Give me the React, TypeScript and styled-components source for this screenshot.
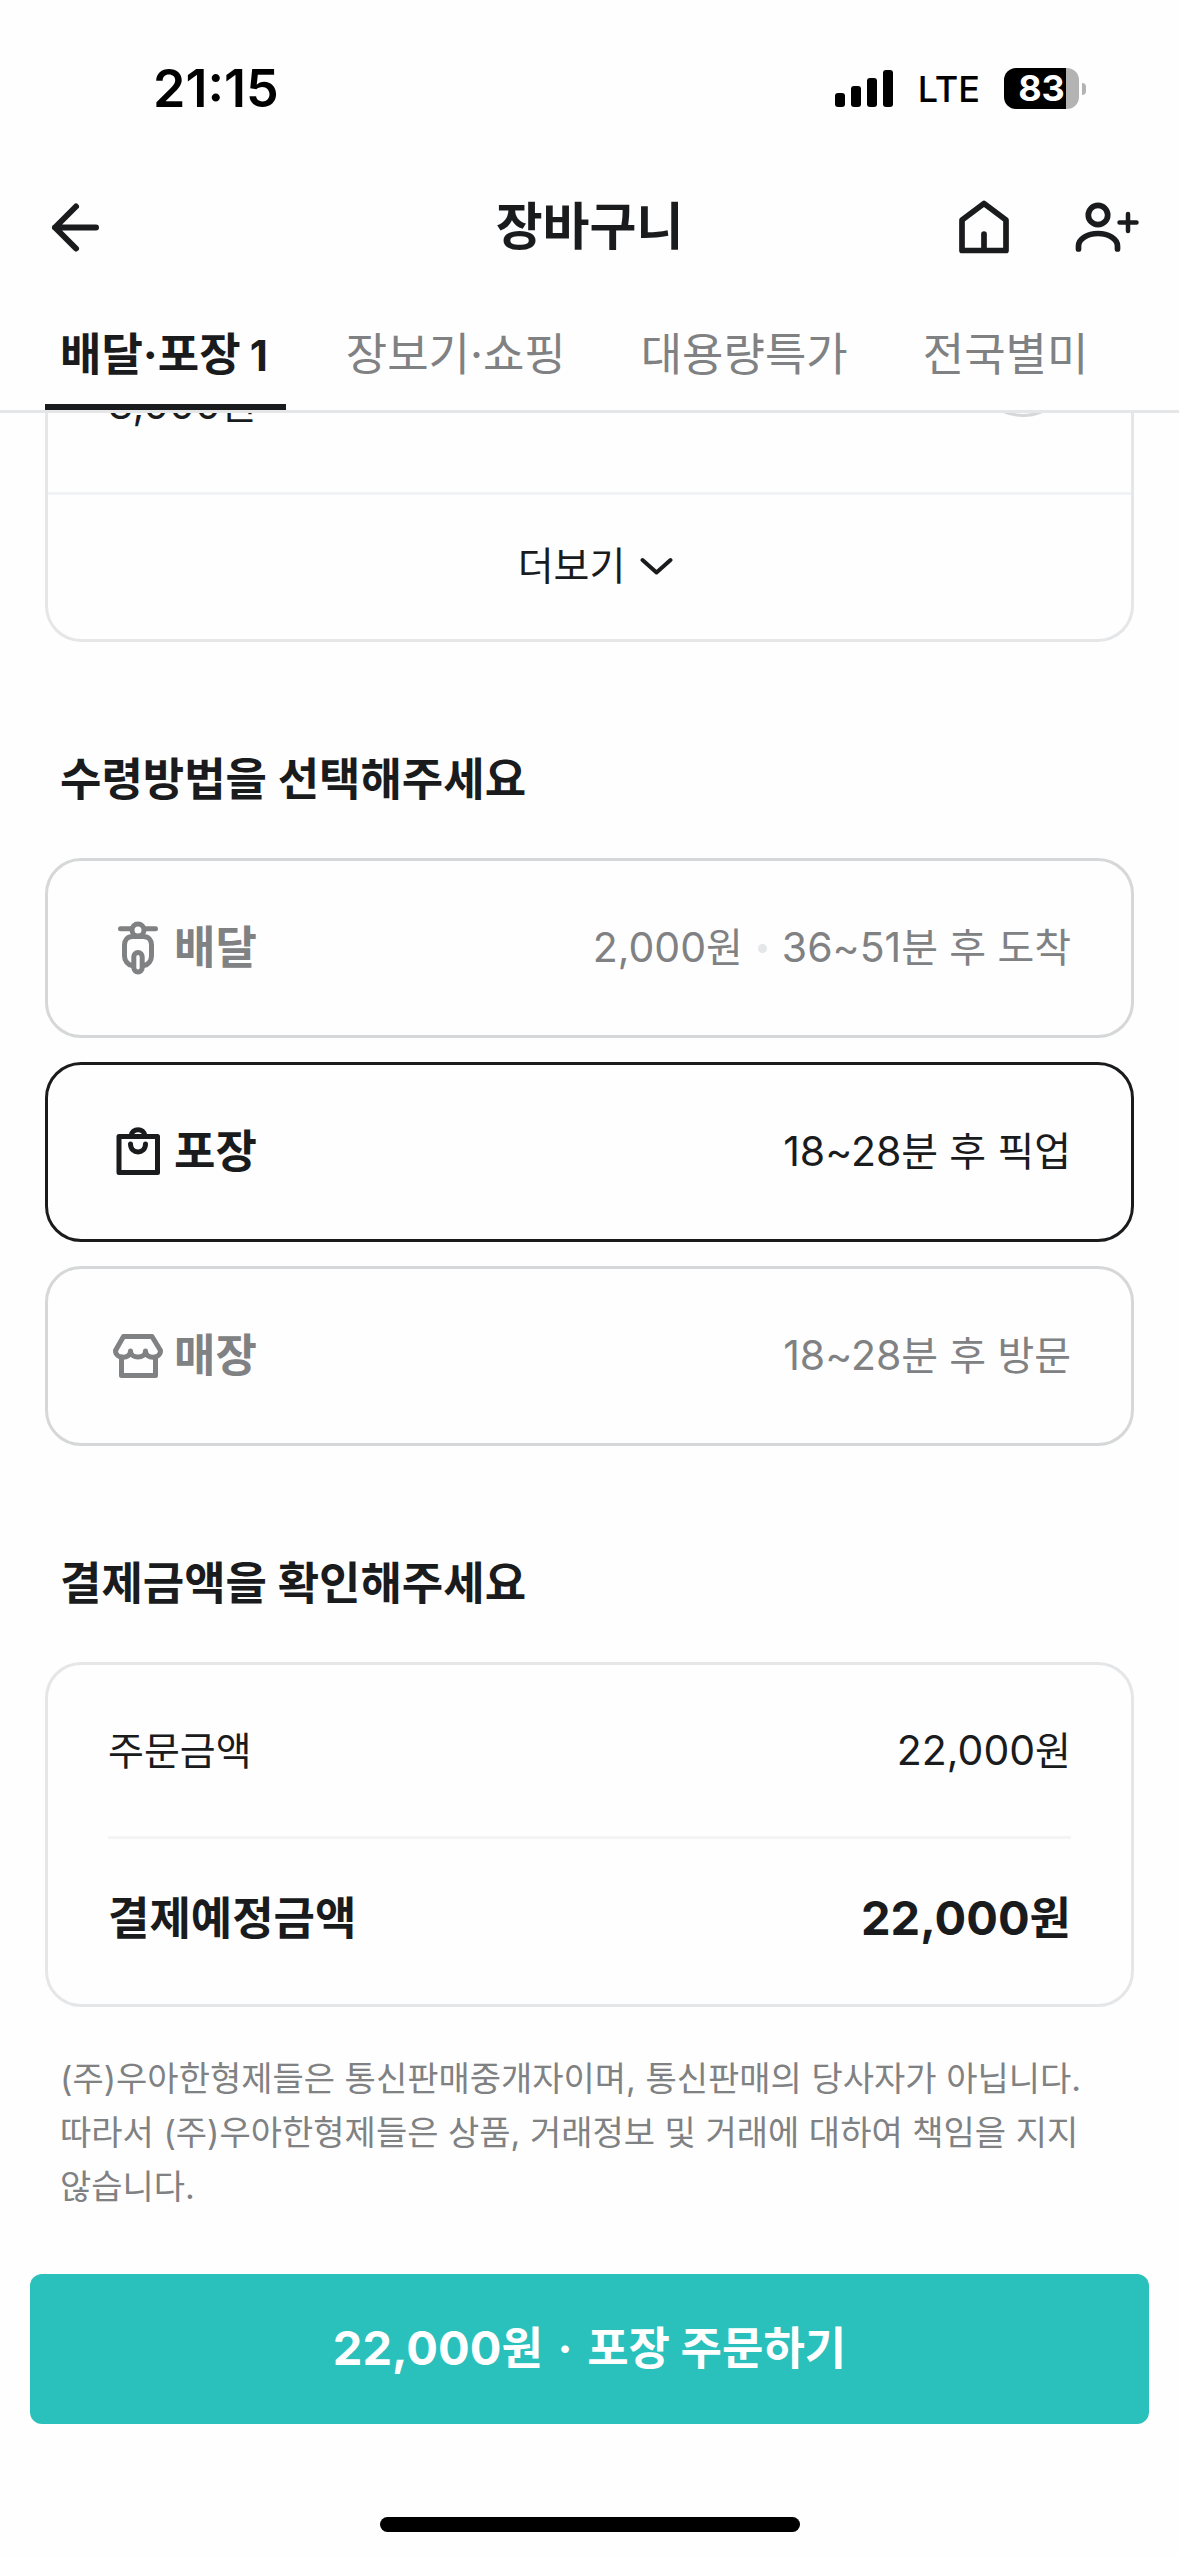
import React, { useState } from "react";
import styled, { createGlobalStyle, css } from "styled-components";

const ink = "#1a1b1d";
const muted = "#808183";

const GlobalStyle = createGlobalStyle`
  *, *::before, *::after { box-sizing: border-box; }
  body {
    margin: 0;
    background: #fefefe;
    color: ${ink};
    font-family: Inter, "Noto Sans CJK KR", sans-serif;
  }
  button, input { font: inherit; color: inherit; }
  h1, h2, p, dl, dd { margin: 0; }
`;

const Screen = styled.div`
  display: flex;
  flex-direction: column;
  min-height: 100vh;
  overflow: hidden;
`;

const Top = styled.div`
  position: relative;
  z-index: 1;
  background: #fefefe;
  border-bottom: 3px solid #e5e6e8;
`;

const StatusBar = styled.div`
  display: flex;
  align-items: center;
  justify-content: space-between;
  height: 177px;
  padding: 0 93px 0 153px;
  color: #000;
`;

const Clock = styled.time`
  font-size: 52px;
  font-weight: 600;
  line-height: 60px;
`;

const StatusIcons = styled.div`
  display: flex;
  align-items: center;
  gap: 24px;
`;

const Carrier = styled.span`
  font-size: 36px;
  font-weight: 500;
  line-height: 48px;
`;

const Battery = styled.div`
  display: flex;
  align-items: center;
  gap: 3px;
`;

const BatteryBody = styled.div`
  display: flex;
  align-items: center;
  justify-content: center;
  width: 75px;
  height: 41px;
  border-radius: 12px;
  background: linear-gradient(to right, #000 83%, #b3b3b3 83%);
  color: #fff;
  font-size: 36px;
  font-weight: 700;
  line-height: 41px;
`;

const BatteryTip = styled.div`
  width: 4px;
  height: 12px;
  border-radius: 0 4px 4px 0;
  background: #b3b3b3;
`;

const Header = styled.header`
  display: grid;
  grid-template-columns: 1fr auto 1fr;
  align-items: center;
  height: 99px;
  padding: 0 39px;
`;

const Title = styled.h1`
  font-size: 51px;
  font-weight: 700;
  line-height: 72px;
`;

const Actions = styled.div`
  display: flex;
  justify-content: flex-end;
  gap: 60px;
`;

const IconButton = styled.button`
  display: flex;
  justify-self: start;
  padding: 0;
  border: 0;
  background: none;
  cursor: pointer;
`;

const Tabs = styled.nav`
  display: flex;
  gap: 45px;
  padding: 24px 45px 0;
`;

const Tab = styled.button<{ $active: boolean }>`
  height: 110px;
  padding: 6px 15px 0;
  border: 0;
  border-bottom: 6px solid ${(p) => (p.$active ? ink : "transparent")};
  background: none;
  color: ${(p) => (p.$active ? ink : muted)};
  font-size: 45px;
  font-weight: ${(p) => (p.$active ? 700 : 400)};
  line-height: 66px;
  white-space: nowrap;
  cursor: pointer;
`;

const Count = styled.span`
  margin: 0 3px 0 9px;
  font-size: 42px;
  line-height: 1;
`;

const Main = styled.main`
  display: flex;
  flex-direction: column;
  margin-top: -92px;
  padding: 0 45px;
`;

const Card = styled.div`
  border: 3px solid #e5e6e8;
  border-radius: 36px;
`;

const MenuCard = styled(Card)`
  border-top: 0;
  border-radius: 0 0 36px 36px;
`;

const MenuRow = styled.div`
  display: flex;
  justify-content: space-between;
  align-items: flex-start;
  height: 171px;
  padding: 0 60px;
`;

const MenuPrice = styled.span`
  padding-top: 54px;
  font-size: 39px;
  line-height: 60px;
`;

const AddButton = styled.button`
  display: flex;
  align-items: center;
  justify-content: center;
  width: 96px;
  height: 96px;
  padding: 0;
  border: 3px solid #d6d7d9;
  border-radius: 50%;
  background: none;
`;

const MoreButton = styled.button`
  display: flex;
  align-items: center;
  justify-content: center;
  gap: 15px;
  width: 100%;
  height: 147px;
  padding: 0 0 3px 12px;
  border: 0;
  border-top: 3px solid #f2f3f6;
  background: none;
  font-size: 39px;
  line-height: 60px;
  cursor: pointer;
`;

const SectionTitle = styled.h2`
  margin: 105px 15px 45px;
  font-size: 45px;
  font-weight: 700;
  line-height: 66px;
`;

const Options = styled.div`
  display: flex;
  flex-direction: column;
  gap: 24px;
`;

const HiddenRadio = styled.input`
  position: absolute;
  opacity: 0;
`;

const Option = styled.label<{ $selected: boolean }>`
  display: flex;
  align-items: center;
  justify-content: space-between;
  height: 180px;
  padding: 0 60px 0 63px;
  border: 3px solid ${(p) => (p.$selected ? ink : "#d6d7d8")};
  border-radius: 36px;
  color: ${(p) => (p.$selected ? ink : muted)};
  cursor: pointer;
`;

const OptionName = styled.span`
  display: flex;
  align-items: center;
  gap: 9px;
  font-size: 45px;
  font-weight: 700;
  line-height: 66px;
`;

const OptionInfo = styled.span`
  display: flex;
  align-items: center;
  font-size: 40px;
  line-height: 60px;
`;

const Num = styled.span<{ $large?: boolean }>`
  font-size: ${(p) => (p.$large ? 47 : 41)}px;
  line-height: 1;
`;

const Dot = styled.span`
  width: 9px;
  height: 9px;
  margin: 0 15px;
  border-radius: 50%;
  background: #e5e6e8;
`;

const Summary = styled(Card).attrs({ as: "dl" })`
  padding: 0 60px;
`;

const SummaryRow = styled.div<{ $total?: boolean }>`
  display: flex;
  align-items: center;
  justify-content: space-between;
  height: 171px;
  font-size: 39px;
  line-height: 60px;
  ${(p) =>
    p.$total &&
    css`
      height: 168px;
      padding-bottom: 6px;
      border-top: 3px solid #f4f4f5;
      font-size: 45px;
      font-weight: 700;
      line-height: 66px;
    `}
`;

const Notice = styled.p`
  margin: 45px 15px 0;
  color: ${muted};
  font-size: 34px;
  line-height: 54px;
  word-break: keep-all;
`;

const Bottom = styled.footer`
  display: flex;
  flex-direction: column;
  align-items: center;
  padding: 60px 30px 24px;
`;

const OrderButton = styled.button`
  width: 100%;
  height: 150px;
  border: 0;
  border-radius: 12px;
  background: #2ac1bc;
  color: #fff;
  font-size: 45px;
  font-weight: 700;
  line-height: 66px;
  cursor: pointer;
`;

const Separator = styled.span`
  margin: 0 4px;
`;

const HomeIndicator = styled.div`
  width: 420px;
  height: 15px;
  margin-top: 93px;
  border-radius: 8px;
  background: #000;
`;

const SignalIcon = () => (
  <svg width="59" height="37" viewBox="0 0 59 37" fill="currentColor" aria-hidden="true">
    <rect x="0" y="23" width="10" height="14" rx="3" />
    <rect x="16" y="16" width="10" height="21" rx="3" />
    <rect x="32" y="8" width="10" height="29" rx="3" />
    <rect x="48" y="0" width="10" height="37" rx="3" />
  </svg>
);

const BackIcon = () => (
  <svg width="60" height="60" viewBox="0 0 60 60" fill="none" stroke={ink} strokeWidth="6" strokeLinecap="round" strokeLinejoin="round">
    <path d="M57 30.500H16M37 9.500L16 30.500l21 21" />
  </svg>
);

const HomeIcon = () => (
  <svg width="60" height="60" viewBox="0 0 60 60" fill="none" stroke={ink} strokeWidth="5.700" strokeLinecap="round" strokeLinejoin="round">
    <path d="M8 23L30 6.500 52 23v30.500H8zM30 37v16" />
  </svg>
);

const AddPersonIcon = () => (
  <svg width="66" height="60" viewBox="0 0 66 60" fill="none" stroke={ink} strokeWidth="5.700" strokeLinecap="round" strokeLinejoin="round">
    <circle cx="24" cy="18" r="9.700" />
    <path d="M4.500 52v-3c0-7 9-12.500 19.500-12.500S43.500 42 43.500 49v3" />
    <path d="M45.500 25.500h17M54 17v17" strokeWidth="4.500" />
  </svg>
);

const PlusIcon = () => (
  <svg width="48" height="48" viewBox="0 0 48 48" fill="none" stroke={ink} strokeWidth="5" strokeLinecap="round">
    <path d="M10 24h28M24 10v28" />
  </svg>
);

const ChevronIcon = () => (
  <svg width="33" height="24" viewBox="0 0 33 24" fill="none" stroke={ink} strokeWidth="4" strokeLinecap="round" strokeLinejoin="round">
    <path d="M2.500 6l14 12.500L30.500 6" />
  </svg>
);

const iconProps = {
  width: 54,
  height: 54,
  viewBox: "0 0 54 54",
  fill: "none",
  stroke: "currentColor",
  strokeWidth: 5,
  strokeLinecap: "round" as const,
  strokeLinejoin: "round" as const,
};

const ScooterIcon = () => (
  <svg {...iconProps}>
    <circle cx="27" cy="9" r="6" />
    <path d="M9.500 7.700h11M33.500 7.700h11" />
    <path d="M21 44.500c-4-.5-7.500-4.500-7.500-9.500V24c0-5 3-8.500 8-8.500h11c5 0 8 3.500 8 8.500v11c0 5-3.500 9-7.500 9.500" />
    <rect x="22.800" y="31.500" width="8.400" height="19.500" rx="4.200" />
  </svg>
);

const BagIcon = () => (
  <svg {...iconProps}>
    <path d="M8 11.500h38.500v36H8zM19.500 19c0 10.500 15 10.500 15 0M20 11c1-8.500 13-8.500 14 0" />
  </svg>
);

const StoreIcon = () => (
  <svg {...iconProps}>
    <path d="M10.500 28v18.500h34V28" />
    <path d="M12.500 7.500h28.500l8.500 14c0 9-15 9-15 .5 0 8-15 8-15 0 0 8.500-15 8.500-15-.5z" />
  </svg>
);

const tabs = ["배달·포장", "장보기·쇼핑", "대용량특가", "전국별미"];

const options = [
  {
    id: "delivery",
    name: "배달",
    Icon: ScooterIcon,
    info: (
      <>
        <span><Num>2,000</Num>원</span>
        <Dot />
        <span><Num>36~51</Num>분 후 도착</span>
      </>
    ),
  },
  {
    id: "pickup",
    name: "포장",
    Icon: BagIcon,
    info: <span><Num>18~28</Num>분 후 픽업</span>,
  },
  {
    id: "store",
    name: "매장",
    Icon: StoreIcon,
    info: <span><Num>18~28</Num>분 후 방문</span>,
  },
];

export default function App() {
  const [tab, setTab] = useState(0);
  const [method, setMethod] = useState("pickup");

  return (
    <Screen>
      <GlobalStyle />
      <Top>
        <StatusBar>
          <Clock>21:15</Clock>
          <StatusIcons>
            <SignalIcon />
            <Carrier>LTE</Carrier>
            <Battery>
              <BatteryBody>83</BatteryBody>
              <BatteryTip />
            </Battery>
          </StatusIcons>
        </StatusBar>
        <Header>
          <IconButton aria-label="뒤로"><BackIcon /></IconButton>
          <Title>장바구니</Title>
          <Actions>
            <IconButton aria-label="홈"><HomeIcon /></IconButton>
            <IconButton aria-label="함께 주문"><AddPersonIcon /></IconButton>
          </Actions>
        </Header>
        <Tabs>
          {tabs.map((name, i) => (
            <Tab key={name} $active={i === tab} onClick={() => setTab(i)}>
              {name}
              {i === 0 && <Count>1</Count>}
            </Tab>
          ))}
        </Tabs>
      </Top>
      <Main>
        <MenuCard>
          <MenuRow>
            <MenuPrice><Num>3,000</Num>원</MenuPrice>
            <AddButton aria-label="메뉴 추가"><PlusIcon /></AddButton>
          </MenuRow>
          <MoreButton>더보기<ChevronIcon /></MoreButton>
        </MenuCard>

        <SectionTitle>수령방법을 선택해주세요</SectionTitle>
        <Options>
          {options.map(({ id, name, Icon, info }) => (
            <Option key={id} $selected={id === method}>
              <HiddenRadio type="radio" name="method" checked={id === method} onChange={() => setMethod(id)} />
              <OptionName><Icon />{name}</OptionName>
              <OptionInfo>{info}</OptionInfo>
            </Option>
          ))}
        </Options>

        <SectionTitle>결제금액을 확인해주세요</SectionTitle>
        <Summary>
          <SummaryRow>
            <dt>주문금액</dt>
            <dd><Num>22,000</Num>원</dd>
          </SummaryRow>
          <SummaryRow $total>
            <dt>결제예정금액</dt>
            <dd><Num $large>22,000</Num>원</dd>
          </SummaryRow>
        </Summary>
        <Notice>
          (주)우아한형제들은 통신판매중개자이며, 통신판매의 당사자가 아닙니다. 따라서 (주)우아한형제들은 상품, 거래정보 및 거래에 대하여 책임을 지지 않습니다.
        </Notice>
      </Main>
      <Bottom>
        <OrderButton>
          <Num $large>22,000</Num>원 <Separator>·</Separator> 포장 주문하기
        </OrderButton>
        <HomeIndicator />
      </Bottom>
    </Screen>
  );
}
